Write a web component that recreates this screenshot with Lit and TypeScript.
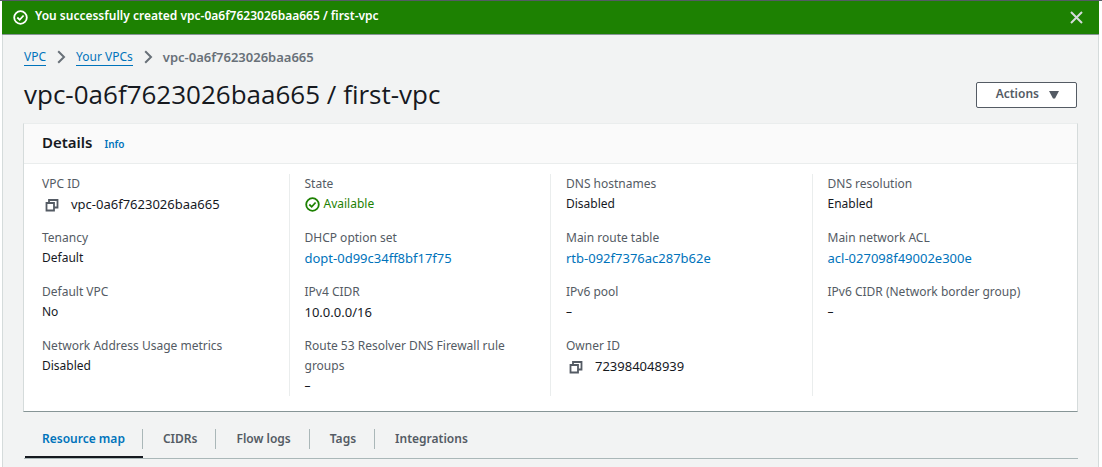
import { LitElement, html, css, svg, nothing } from "lit";
import { customElement, state } from "lit/decorators.js";

interface Field {
  label: string;
  value: string;
  kind?: "text" | "link" | "copy" | "status";
}

const COLUMNS: Field[][] = [
  [
    { label: "VPC ID", value: "vpc-0a6f7623026baa665", kind: "copy" },
    { label: "Tenancy", value: "Default" },
    { label: "Default VPC", value: "No" },
    { label: "Network Address Usage metrics", value: "Disabled" },
  ],
  [
    { label: "State", value: "Available", kind: "status" },
    { label: "DHCP option set", value: "dopt-0d99c34ff8bf17f75", kind: "link" },
    { label: "IPv4 CIDR", value: "10.0.0.0/16" },
    { label: "Route 53 Resolver DNS Firewall rule groups", value: "–" },
  ],
  [
    { label: "DNS hostnames", value: "Disabled" },
    { label: "Main route table", value: "rtb-092f7376ac287b62e", kind: "link" },
    { label: "IPv6 pool", value: "–" },
    { label: "Owner ID", value: "723984048939", kind: "copy" },
  ],
  [
    { label: "DNS resolution", value: "Enabled" },
    { label: "Main network ACL", value: "acl-027098f49002e300e", kind: "link" },
    { label: "IPv6 CIDR (Network border group)", value: "–" },
  ],
];

const TABS = ["Resource map", "CIDRs", "Flow logs", "Tags", "Integrations"];

const checkCircle = html`<svg class="icon" width="15" height="15" viewBox="0 0 15 15" aria-hidden="true">
  ${svg`<circle cx="7.5" cy="7.5" r="6.3"></circle><path d="M4.3 7.5 L6.7 9.8 L10.6 5.5"></path>`}
</svg>`;

const copyIcon = html`<svg class="icon" width="14" height="14" viewBox="0 0 14 14" aria-hidden="true">
  <path d="M1.5 5 H9 V12.5 H1.5 Z"></path>
  <path d="M4 5 V2 H12.5 V9.5 H9"></path>
</svg>`;

const chevron = html`<svg class="chevron" width="9" height="14" viewBox="0 0 9 14" aria-hidden="true">
  <path d="M1.2 1.2 L7 7 L1.2 12.8"></path>
</svg>`;

@customElement("app-root")
export class AppRoot extends LitElement {
  @state() private activeTab = 0;
  @state() private noticeOpen = true;

  static styles = css`
    :host {
      display: block;
      min-height: 100vh;
      box-sizing: border-box;
      padding: 0 3px 0 2px;
      background: #fff;
      border-top: 1px solid #545b64;
      font-family: "Noto Sans", "Open Sans", sans-serif;
      font-size: 12px;
      line-height: 20px;
      color: #16191f;
    }
    * {
      box-sizing: border-box;
    }
    button {
      font: inherit;
      color: inherit;
      background: none;
      border: 0;
      padding: 0;
      margin: 0;
      cursor: pointer;
    }
    a {
      color: #0073bb;
      text-decoration: none;
    }
    svg {
      display: block;
      flex: none;
      fill: none;
      stroke: currentColor;
    }
    .icon {
      stroke-width: 1.8;
    }
    .notice {
      display: flex;
      align-items: center;
      gap: 7px;
      height: 34px;
      padding: 0 16px 0 11px;
      border-bottom: 1px solid #879596;
      background: #1d8102;
      color: #fff;
      font-weight: 600;
    }
    .notice-text {
      flex: 1;
      padding-bottom: 3px;
    }
    .close {
      color: #d5dbdb;
    }
    .close svg {
      stroke-width: 2;
    }
    .page {
      min-height: calc(100vh - 35px);
      padding: 12px 20px 0;
      border: solid #d5dbdb;
      border-width: 0 1px;
      background: #f2f3f3;
    }
    .crumbs {
      display: flex;
      align-items: center;
      gap: 10px;
      margin: 0;
      padding: 0 1px;
      list-style: none;
      color: #687078;
    }
    .crumbs li {
      display: flex;
      align-items: center;
      gap: 11px;
    }
    .crumbs a {
      line-height: 17px;
      border-bottom: 1px solid #0073bb;
    }
    .crumbs .here {
      font-size: 13px;
      font-weight: 600;
    }
    .chevron {
      stroke-width: 2;
    }
    .title-row {
      display: flex;
      align-items: center;
      justify-content: space-between;
      margin: 9px 0 10px;
      padding: 0 1px;
    }
    h1 {
      margin: 0;
      padding-bottom: 1px;
      font-family: "Open Sans", "Noto Sans", sans-serif;
      font-size: 26px;
      line-height: 36px;
      font-weight: 400;
    }
    .actions {
      display: flex;
      align-items: center;
      gap: 10px;
      height: 26px;
      padding: 0 17px 2px 19px;
      border: 1px solid #545b64;
      border-radius: 2px;
      background: #fff;
      color: #545b64;
      font-weight: 600;
    }
    .actions svg {
      fill: currentColor;
      stroke: none;
      margin-top: 3px;
    }
    .card {
      border: 1px solid #d5dbdb;
      border-top-color: #eaeded;
      border-bottom-color: #879596;
      background: #fff;
    }
    .card-head {
      display: flex;
      align-items: baseline;
      gap: 12px;
      padding: 8px 18px 11px;
      background: #fafafa;
      border-bottom: 1px solid #eaeded;
    }
    h2 {
      margin: 0;
      font-size: 15px;
      line-height: 20px;
      font-weight: 600;
    }
    .info {
      font-size: 10px;
      line-height: 16px;
      font-weight: 600;
    }
    .grid {
      display: grid;
      grid-template-columns: repeat(4, 1fr);
      padding: 10px 4px 15px 3px;
    }
    .col {
      display: flex;
      flex-direction: column;
      gap: 14px;
      margin: 0;
      padding: 0 14px 0 15px;
    }
    .col + .col {
      border-left: 1px solid #eaeded;
    }
    dt {
      color: #545b64;
    }
    dd {
      display: flex;
      align-items: center;
      margin: 0;
    }
    .code {
      font-size: 13px;
    }
    .status {
      gap: 4px;
      color: #1d8102;
    }
    .copy {
      margin: 2px 12px 0 3px;
      color: #545b64;
    }
    .tabs {
      display: flex;
      margin: 12px 0 0 1px;
      padding-left: 1px;
      border-bottom: 1px solid #aab7b8;
    }
    .tab {
      padding: 5px 0 7px;
      border-bottom: 2px solid transparent;
      color: #545b64;
      font-weight: 600;
    }
    .tab span {
      display: block;
      padding: 0 17px;
      border-right: 1px solid #aab7b8;
    }
    .tab + .tab span {
      padding: 0 18px 0 20px;
    }
    .tab:last-child span {
      border-right: 0;
    }
    .tab.active {
      border-color: #16191f;
      color: #0073bb;
    }
  `;

  private renderValue(f: Field) {
    switch (f.kind) {
      case "link":
        return html`<dd class="code"><a href="#">${f.value}</a></dd>`;
      case "status":
        return html`<dd class="status">${checkCircle}${f.value}</dd>`;
      case "copy":
        return html`<dd class="code">
          <button class="copy" aria-label="Copy ${f.label}">${copyIcon}</button>${f.value}
        </dd>`;
      default:
        return html`<dd class=${/^\d/.test(f.value) ? "code" : ""}>${f.value}</dd>`;
    }
  }

  render() {
    return html`
      ${this.noticeOpen
        ? html`<div class="notice" role="status">
            ${checkCircle}
            <span class="notice-text">You successfully created vpc-0a6f7623026baa665 / first-vpc</span>
            <button class="close" aria-label="Dismiss" @click=${() => (this.noticeOpen = false)}>
              <svg width="13" height="13" viewBox="0 0 13 13" aria-hidden="true">
                <path d="M1 1 L12 12 M12 1 L1 12"></path>
              </svg>
            </button>
          </div>`
        : nothing}
      <main class="page">
        <nav aria-label="Breadcrumbs">
          <ol class="crumbs">
            <li><a href="#">VPC</a>${chevron}</li>
            <li><a href="#">Your VPCs</a>${chevron}</li>
            <li class="here" aria-current="page">vpc-0a6f7623026baa665</li>
          </ol>
        </nav>
        <header class="title-row">
          <h1>vpc-0a6f7623026baa665 / first-vpc</h1>
          <button class="actions" aria-haspopup="menu">
            Actions
            <svg width="10" height="8" viewBox="0 0 10 8" aria-hidden="true"><path d="M0 0 H10 L6 7.5 H4 Z"></path></svg>
          </button>
        </header>
        <section class="card" aria-labelledby="details">
          <div class="card-head">
            <h2 id="details">Details</h2>
            <a class="info" href="#">Info</a>
          </div>
          <div class="grid">
            ${COLUMNS.map(
              (col) => html`<dl class="col">
                ${col.map((f) => html`<div><dt>${f.label}</dt>${this.renderValue(f)}</div>`)}
              </dl>`
            )}
          </div>
        </section>
        <div class="tabs" role="tablist">
          ${TABS.map(
            (t, i) => html`<button
              role="tab"
              class="tab ${i === this.activeTab ? "active" : ""}"
              aria-selected=${i === this.activeTab}
              @click=${() => (this.activeTab = i)}
            ><span>${t}</span></button>`
          )}
        </div>
      </main>
    `;
  }
}
